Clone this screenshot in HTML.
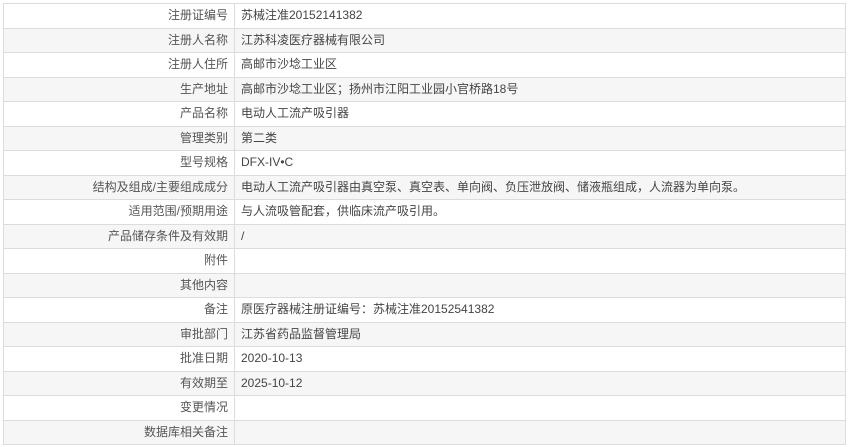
<!DOCTYPE html>
<html><head><meta charset="utf-8"><style>
html,body{margin:0;padding:0;background:#fff;width:850px;height:447px;overflow:hidden}
table{position:absolute;left:3px;top:3px;width:843px;border-collapse:collapse;font-family:"Liberation Sans","Noto Sans CJK SC",sans-serif;font-size:12px;color:#444}
td{border:1px solid #dcdcdc;height:23.5px;padding:0 6px;line-height:23px;white-space:nowrap}
td.l{width:218px;text-align:right;color:#555}
tr:nth-child(even) td{background:#f6f6f6}
</style></head><body>
<table>
<tr><td class="l">注册证编号</td><td>苏械注准20152141382</td></tr>
<tr><td class="l">注册人名称</td><td>江苏科凌医疗器械有限公司</td></tr>
<tr><td class="l">注册人住所</td><td>高邮市沙埝工业区</td></tr>
<tr><td class="l">生产地址</td><td>高邮市沙埝工业区；扬州市江阳工业园小官桥路18号</td></tr>
<tr><td class="l">产品名称</td><td>电动人工流产吸引器</td></tr>
<tr><td class="l">管理类别</td><td>第二类</td></tr>
<tr><td class="l">型号规格</td><td>DFX-IV•C</td></tr>
<tr><td class="l">结构及组成/主要组成成分</td><td>电动人工流产吸引器由真空泵、真空表、单向阀、负压泄放阀、储液瓶组成，人流器为单向泵。</td></tr>
<tr><td class="l">适用范围/预期用途</td><td>与人流吸管配套，供临床流产吸引用。</td></tr>
<tr><td class="l">产品储存条件及有效期</td><td>/</td></tr>
<tr><td class="l">附件</td><td></td></tr>
<tr><td class="l">其他内容</td><td></td></tr>
<tr><td class="l">备注</td><td>原医疗器械注册证编号：苏械注准20152541382</td></tr>
<tr><td class="l">审批部门</td><td>江苏省药品监督管理局</td></tr>
<tr><td class="l">批准日期</td><td>2020-10-13</td></tr>
<tr><td class="l">有效期至</td><td>2025-10-12</td></tr>
<tr><td class="l">变更情况</td><td></td></tr>
<tr><td class="l">数据库相关备注</td><td></td></tr>
</table>
</body></html>
